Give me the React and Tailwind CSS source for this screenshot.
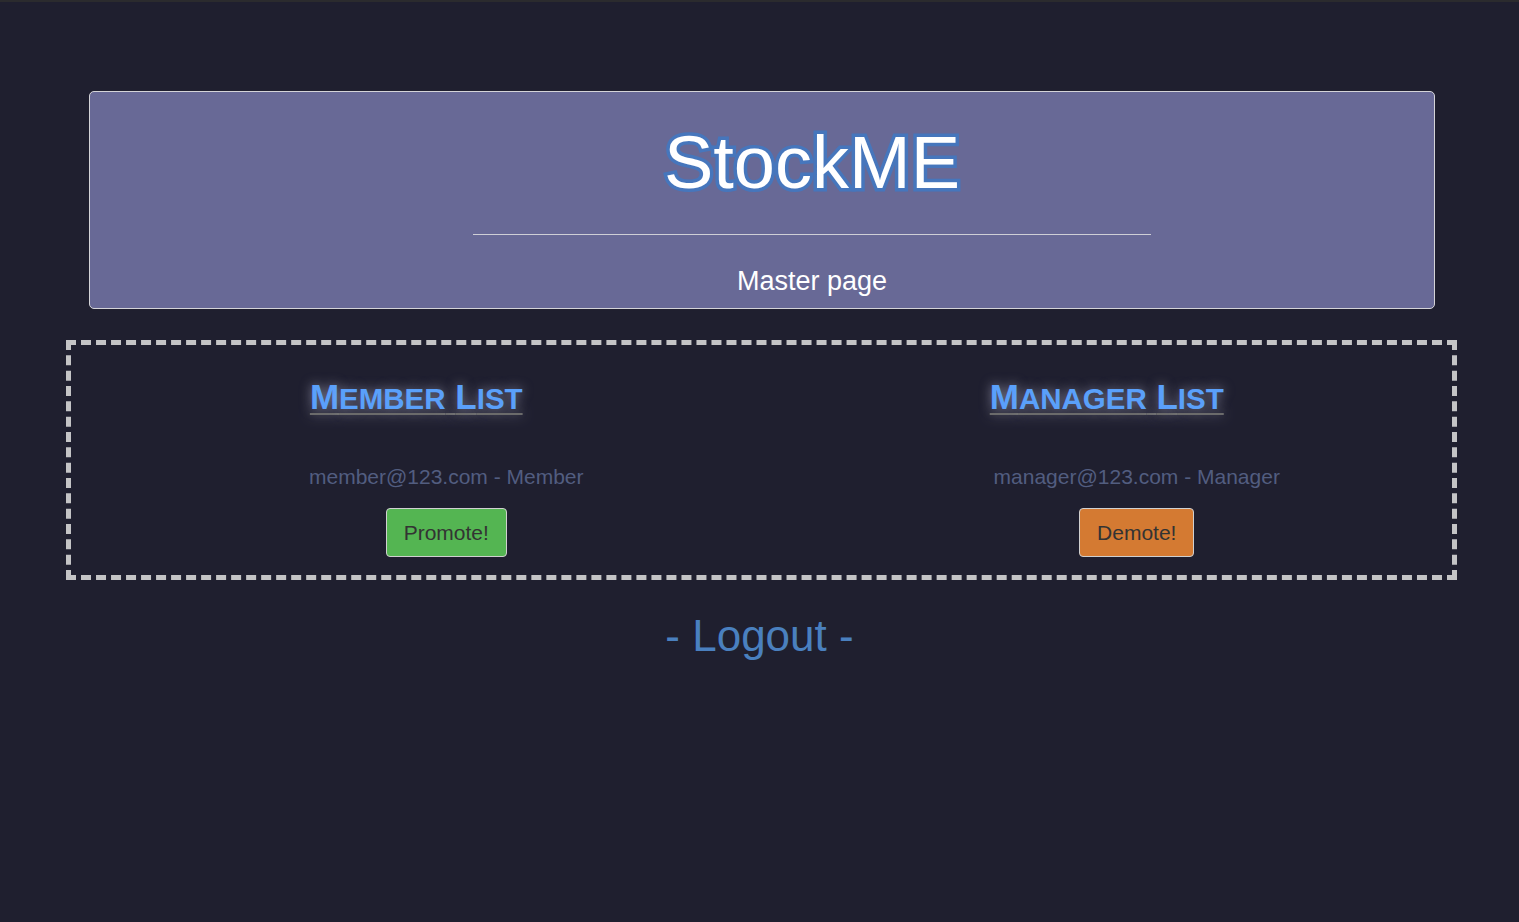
function ListHeading({ first, rest, first2, rest2 }) {
    return (
        <h2 className="font-bold text-[35px] leading-none text-[#5aa0fa] underline decoration-[#6b6b6b] decoration-2 underline-offset-[4px] [text-shadow:0_0_12px_rgba(200,200,225,0.6)]">
            {first}<span className="text-[29.5px]">{rest}</span> {first2}<span className="text-[29.5px]">{rest2}</span>
        </h2>
    );
}

export default function App() {
    return (
        <main className="min-h-screen bg-[#1f1f2f] border-t-2 border-[#2b2b2e] pt-[89px] pb-10 font-['Liberation_Sans',Arial,sans-serif]">
            <header className="ml-[89px] mr-[84px] h-[218px] flex flex-col items-center border border-[#d4d4d8] rounded-[5px] bg-[#686996] pt-[34px] pl-[100px]">
                <h1 className="text-[74px] leading-none text-white [-webkit-text-stroke:7px_#4676bc] [paint-order:stroke_fill]">StockME</h1>
                <hr className="w-[678px] mt-[34px] border-t border-[#cfcfd6]" />
                <p className="mt-[33px] text-[27px] leading-none text-white">Master page</p>
            </header>

            <section className="mt-[31px] ml-[66px] mr-[62px] h-[240px] border-[5px] border-dashed border-[#c4c4c6] grid grid-cols-2 pt-[34px]">
                <div className="flex flex-col items-center">
                    <ListHeading first="M" rest="EMBER" first2="L" rest2="IST" />
                    <div className="flex flex-col items-center pl-[60px]">
                        <p className="mt-[52px] text-[21px] leading-none text-[#525d80]">member@123.com - Member</p>
                        <button className="mt-[21px] px-[17px] py-[13px] text-[21px] leading-none text-[#333] bg-[#54b552] border border-[#d0d0d0] rounded-[4px]">Promote!</button>
                    </div>
                </div>
                <div className="flex flex-col items-center">
                    <ListHeading first="M" rest="ANAGER" first2="L" rest2="IST" />
                    <div className="flex flex-col items-center pl-[60px]">
                        <p className="mt-[52px] text-[21px] leading-none text-[#525d80]">manager@123.com - Manager</p>
                        <button className="mt-[21px] px-[17px] py-[13px] text-[21px] leading-none text-[#333] bg-[#d47a32] border border-[#d0d0d0] rounded-[4px]">Demote!</button>
                    </div>
                </div>
            </section>

            <div className="mt-[34px] flex justify-center">
                <a href="#" className="text-[44px] leading-none text-[#4a80bf]">- Logout -</a>
            </div>
        </main>
    );
}
